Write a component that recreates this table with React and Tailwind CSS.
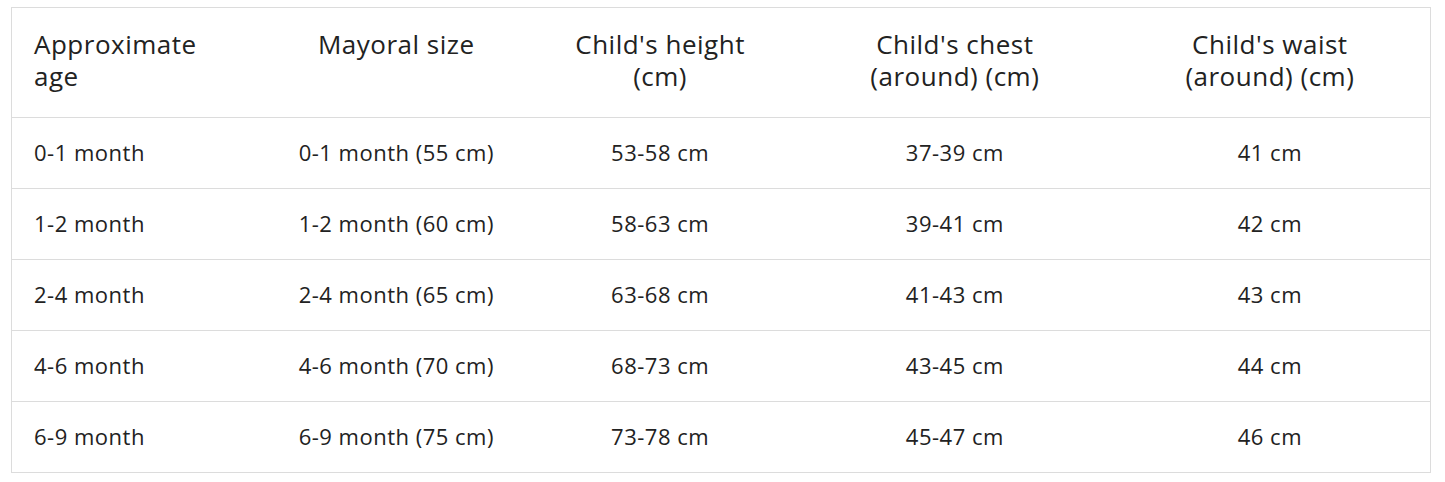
export default function App() {
  const rows = [
    ["0-1 month", "0-1 month (55 cm)", "53-58 cm", "37-39 cm", "41 cm"],
    ["1-2 month", "1-2 month (60 cm)", "58-63 cm", "39-41 cm", "42 cm"],
    ["2-4 month", "2-4 month (65 cm)", "63-68 cm", "41-43 cm", "43 cm"],
    ["4-6 month", "4-6 month (70 cm)", "68-73 cm", "43-45 cm", "44 cm"],
    ["6-9 month", "6-9 month (75 cm)", "73-78 cm", "45-47 cm", "46 cm"],
  ];
  return (
    <div className="bg-white w-[1445px] h-[482px] pt-[7px] pl-[11px]" style={{ fontFamily: '"Open Sans", sans-serif' }}>
      <table className="w-[1420px] border-collapse border border-[#dcdcdc] text-[22px] leading-[32px] tracking-[0.5px] text-[#222]">
        <colgroup>
          <col className="w-[261px]" />
          <col className="w-[248px]" />
          <col className="w-[280px]" />
          <col className="w-[310px]" />
          <col className="w-[321px]" />
        </colgroup>
        <thead>
          <tr className="h-[110px] border-b border-[#dcdcdc] text-[26px]">
            <th className="font-normal text-left pl-[22px] align-top pt-[20px]">
              <div className="max-w-[190px]">Approximate age</div>
            </th>
            <th className="font-normal text-center align-top pt-[20px]">Mayoral size</th>
            <th className="font-normal text-center align-top pt-[20px]">Child's height<br />(cm)</th>
            <th className="font-normal text-center align-top pt-[20px]">Child's chest<br />(around) (cm)</th>
            <th className="font-normal text-center align-top pt-[20px]">Child's waist<br />(around) (cm)</th>
          </tr>
        </thead>
        <tbody>
          {rows.map((r, i) => (
            <tr key={i} className="h-[71px] border-b border-[#dcdcdc]">
              <td className="text-left pl-[22px] align-middle pb-[3px]">{r[0]}</td>
              <td className="text-center align-middle pb-[3px]">{r[1]}</td>
              <td className="text-center align-middle pb-[3px]">{r[2]}</td>
              <td className="text-center align-middle pb-[3px]">{r[3]}</td>
              <td className="text-center align-middle pb-[3px]">{r[4]}</td>
            </tr>
          ))}
        </tbody>
      </table>
    </div>
  );
}
